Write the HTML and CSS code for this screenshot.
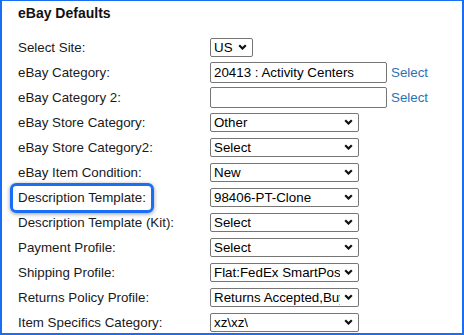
FILE: index.html
```html
<!DOCTYPE html>
<html lang="en">
<head>
  <meta charset="UTF-8" />
  <title>eBay Defaults</title>
  <link rel="stylesheet" href="styles.css">
</head>
<body>
  <div class="frame">
    <h2 class="title">eBay Defaults</h2>

    <div class="fields">
      <div class="field-row">
        <div class="field-label">Select Site:</div>
        <span class="select-wrap">
          <select class="select select-site"><option>US</option></select>
          <svg class="chevron" viewBox="0 0 9 6"><path d="M1.2 1.2 L4.5 4.5 L7.8 1.2" /></svg>
        </span>
      </div>

      <div class="field-row">
        <div class="field-label">eBay Category:</div>
        <input class="text-input" type="text" value="20413 : Activity Centers">
        <a class="pick-link" href="#">Select</a>
      </div>

      <div class="field-row">
        <div class="field-label">eBay Category 2:</div>
        <input class="text-input" type="text" value="">
        <a class="pick-link" href="#">Select</a>
      </div>

      <div class="field-row">
        <div class="field-label">eBay Store Category:</div>
        <span class="select-wrap">
          <select class="select"><option>Other</option></select>
          <svg class="chevron" viewBox="0 0 9 6"><path d="M1.2 1.2 L4.5 4.5 L7.8 1.2" /></svg>
        </span>
      </div>

      <div class="field-row">
        <div class="field-label">eBay Store Category2:</div>
        <span class="select-wrap">
          <select class="select"><option>Select</option></select>
          <svg class="chevron" viewBox="0 0 9 6"><path d="M1.2 1.2 L4.5 4.5 L7.8 1.2" /></svg>
        </span>
      </div>

      <div class="field-row">
        <div class="field-label">eBay Item Condition:</div>
        <span class="select-wrap">
          <select class="select"><option>New</option></select>
          <svg class="chevron" viewBox="0 0 9 6"><path d="M1.2 1.2 L4.5 4.5 L7.8 1.2" /></svg>
        </span>
      </div>

      <div class="field-row">
        <div class="field-label highlight">Description Template:</div>
        <span class="select-wrap">
          <select class="select"><option>98406-PT-Clone</option></select>
          <svg class="chevron" viewBox="0 0 9 6"><path d="M1.2 1.2 L4.5 4.5 L7.8 1.2" /></svg>
        </span>
      </div>

      <div class="field-row">
        <div class="field-label">Description Template (Kit):</div>
        <span class="select-wrap">
          <select class="select"><option>Select</option></select>
          <svg class="chevron" viewBox="0 0 9 6"><path d="M1.2 1.2 L4.5 4.5 L7.8 1.2" /></svg>
        </span>
      </div>

      <div class="field-row">
        <div class="field-label">Payment Profile:</div>
        <span class="select-wrap">
          <select class="select"><option>Select</option></select>
          <svg class="chevron" viewBox="0 0 9 6"><path d="M1.2 1.2 L4.5 4.5 L7.8 1.2" /></svg>
        </span>
      </div>

      <div class="field-row">
        <div class="field-label">Shipping Profile:</div>
        <span class="select-wrap">
          <select class="select"><option>Flat:FedEx SmartPost</option></select>
          <svg class="chevron" viewBox="0 0 9 6"><path d="M1.2 1.2 L4.5 4.5 L7.8 1.2" /></svg>
        </span>
      </div>

      <div class="field-row">
        <div class="field-label">Returns Policy Profile:</div>
        <span class="select-wrap">
          <select class="select"><option>Returns Accepted,Buyer</option></select>
          <svg class="chevron" viewBox="0 0 9 6"><path d="M1.2 1.2 L4.5 4.5 L7.8 1.2" /></svg>
        </span>
      </div>

      <div class="field-row">
        <div class="field-label">Item Specifics Category:</div>
        <span class="select-wrap">
          <select class="select"><option>xz\xz\</option></select>
          <svg class="chevron" viewBox="0 0 9 6"><path d="M1.2 1.2 L4.5 4.5 L7.8 1.2" /></svg>
        </span>
      </div>
    </div>
  </div>
</body>
</html>
```

FILE: styles.css
```css
html, body {
  margin: 0;
  padding: 0;
  background: #fff;
}

body {
  font-family: "Liberation Sans", Arial, sans-serif;
  font-size: 13.33px;
  color: #1a1a1a;
}

.frame {
  box-sizing: border-box;
  width: 464px;
  height: 335px;
  border: 2px solid #1a6ef5;
  border-top-width: 1px;
  padding: 4px 0 0 16px;
  overflow: hidden;
}

.title {
  margin: 0 0 14px 0;
  font-size: 14px;
  line-height: 16px;
  font-weight: bold;
  color: #111;
}

.field-row {
  display: flex;
  align-items: center;
  height: 25px;
}

.field-label {
  width: 192px;
  flex: none;
}

.highlight {
  position: relative;
}

.highlight::after {
  content: "";
  position: absolute;
  left: -8px;
  top: -7px;
  width: 144px;
  height: 30px;
  box-sizing: border-box;
  border: 3px solid #1a6ef5;
  border-radius: 6px;
  box-shadow: 0 1px 4px rgba(0, 0, 0, 0.4);
}

.select-wrap {
  position: relative;
  display: inline-flex;
}

.select {
  -webkit-appearance: none;
  appearance: none;
  box-sizing: border-box;
  width: 149px;
  height: 19px;
  margin: 0;
  padding: 0 18px 0 3px;
  border: 1px solid #767676;
  border-radius: 2px;
  background: #fff;
  font-family: "Liberation Sans", Arial, sans-serif;
  font-size: 13.33px;
  color: #000;
}

.select-site {
  width: 43px;
}

.chevron {
  position: absolute;
  right: 6px;
  top: 6px;
  width: 9px;
  height: 6px;
  pointer-events: none;
}

.chevron path {
  fill: none;
  stroke: #111;
  stroke-width: 2.2;
}

.text-input {
  box-sizing: border-box;
  width: 177px;
  height: 21px;
  margin: 0;
  padding: 0 3px;
  border: 1px solid #767676;
  border-radius: 2px;
  font-family: "Liberation Sans", Arial, sans-serif;
  font-size: 13.33px;
  color: #000;
}

.pick-link {
  margin-left: 4px;
  color: #2a72b5;
  text-decoration: none;
}
```
